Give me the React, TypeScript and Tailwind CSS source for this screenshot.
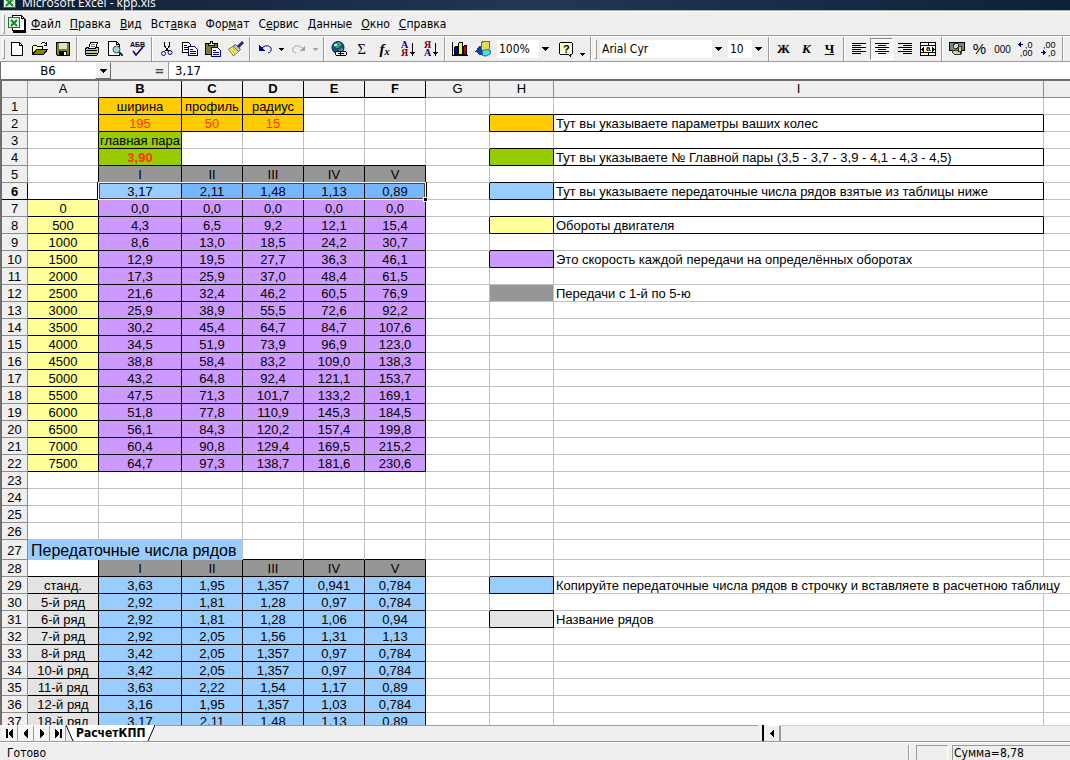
import type { ReactNode } from 'react'
import { clsx } from 'clsx'

type Cell = {
  text?: string;
  fill?: string;
  boxed?: boolean;
  span?: number;
  className?: string;
}

const COLUMNS = ['A', 'B', 'C', 'D', 'E', 'F', 'G', 'H', 'I', 'J']
const COLUMN_WIDTHS = [
  'w-[71px]', 'w-[83px]', 'w-[61px]', 'w-[61px]', 'w-[61px]',
  'w-[61px]', 'w-[64px]', 'w-[64px]', 'w-[490px]', ''
]
const GEARS = ['I', 'II', 'III', 'IV', 'V']

const ORANGE = 'bg-[#ffcc00]'
const GREEN = 'bg-[#99cc00]'
const GRAY = 'bg-[#969696]'
const BLUE = 'bg-[#99ccff]'
const YELLOW = 'bg-[#ffff99]'
const PURPLE = 'bg-[#cc99ff]'
const SILVER = 'bg-[#e3e3e3]'

const SPEEDS = [
  ['0', '0,0', '0,0', '0,0', '0,0', '0,0'],
  ['500', '4,3', '6,5', '9,2', '12,1', '15,4'],
  ['1000', '8,6', '13,0', '18,5', '24,2', '30,7'],
  ['1500', '12,9', '19,5', '27,7', '36,3', '46,1'],
  ['2000', '17,3', '25,9', '37,0', '48,4', '61,5'],
  ['2500', '21,6', '32,4', '46,2', '60,5', '76,9'],
  ['3000', '25,9', '38,9', '55,5', '72,6', '92,2'],
  ['3500', '30,2', '45,4', '64,7', '84,7', '107,6'],
  ['4000', '34,5', '51,9', '73,9', '96,9', '123,0'],
  ['4500', '38,8', '58,4', '83,2', '109,0', '138,3'],
  ['5000', '43,2', '64,8', '92,4', '121,1', '153,7'],
  ['5500', '47,5', '71,3', '101,7', '133,2', '169,1'],
  ['6000', '51,8', '77,8', '110,9', '145,3', '184,5'],
  ['6500', '56,1', '84,3', '120,2', '157,4', '199,8'],
  ['7000', '60,4', '90,8', '129,4', '169,5', '215,2'],
  ['7500', '64,7', '97,3', '138,7', '181,6', '230,6']
]

const RATIOS = [
  ['станд.', '3,63', '1,95', '1,357', '0,941', '0,784'],
  ['5-й ряд', '2,92', '1,81', '1,28', '0,97', '0,784'],
  ['6-й ряд', '2,92', '1,81', '1,28', '1,06', '0,94'],
  ['7-й ряд', '2,92', '2,05', '1,56', '1,31', '1,13'],
  ['8-й ряд', '3,42', '2,05', '1,357', '0,97', '0,784'],
  ['10-й ряд', '3,42', '2,05', '1,357', '0,97', '0,784'],
  ['11-й ряд', '3,63', '2,22', '1,54', '1,17', '0,89'],
  ['12-й ряд', '3,16', '1,95', '1,357', '1,03', '0,784'],
  ['18-й ряд', '3,17', '2,11', '1,48', '1,13', '0,89']
]

const cells: Record<string, Cell> = {}

function fillRow(row: number, from: number, values: string[], style: Cell) {
  values.forEach((text, i) => {
    cells[COLUMNS[from + i] + row] = { text, boxed: true, ...style }
  })
}

function legend(row: number, fill: string, text: string, boxed: boolean, textCell: Cell = {}) {
  cells['H' + row] = { fill, boxed }
  cells['I' + row] = { text, className: 'text-left pl-0.5', ...textCell }
}

fillRow(1, 1, ['ширина', 'профиль', 'радиус'], { fill: ORANGE })
fillRow(2, 1, ['195', '50', '15'], { fill: ORANGE, className: 'text-center text-[#ff3300]' })
fillRow(3, 1, ['главная пара'], { fill: GREEN })
fillRow(4, 1, ['3,90'], { fill: GREEN, className: 'text-center font-bold text-[#ff3300]' })
fillRow(5, 1, GEARS, { fill: GRAY })
fillRow(6, 1, ['3,17'], { fill: BLUE })
fillRow(6, 2, ['2,11', '1,48', '1,13', '0,89'], { fill: 'bg-[#74b6ff]' })
SPEEDS.forEach((values, i) => {
  fillRow(7 + i, 0, values.slice(0, 1), { fill: YELLOW })
  fillRow(7 + i, 1, values.slice(1), { fill: PURPLE })
})
cells.A27 = { text: 'Передаточные числа рядов', fill: BLUE, span: 3, className: 'text-left pl-[3px] text-base leading-[17px]' }
fillRow(28, 1, GEARS, { fill: GRAY })
RATIOS.forEach((values, i) => {
  fillRow(29 + i, 0, values.slice(0, 1), { fill: SILVER })
  fillRow(29 + i, 1, values.slice(1), { fill: BLUE })
})
legend(2, ORANGE, 'Тут вы указываете параметры ваших колес', true, { boxed: true })
legend(4, GREEN, 'Тут вы указываете № Главной пары (3,5 - 3,7 - 3,9 - 4,1 - 4,3 - 4,5)', true, { boxed: true })
legend(6, BLUE, 'Тут вы указываете передаточные числа рядов взятые из таблицы ниже', true, { boxed: true })
legend(8, YELLOW, 'Обороты двигателя', true, { boxed: true })
legend(10, PURPLE, 'Это скорость каждой передачи на определённых оборотах', true)
legend(12, GRAY, 'Передачи с 1-й по 5-ю', false)
legend(29, BLUE, 'Копируйте передаточные числа рядов в строчку и вставляете в расчетною таблицу', true, { span: 2 })
legend(31, SILVER, 'Название рядов', true)

const isBoxed = (col: number, row: number) => Boolean(cells[COLUMNS[col] + row]?.boxed)

function SheetCell({ col, row }: { col: number; row: number }) {
  const cell = cells[COLUMNS[col] + row] ?? {}
  const span = cell.span ?? 1
  const last = col + span >= COLUMNS.length
  const active = row === 6 && col === 1
  const blackRight = cell.boxed || isBoxed(col + span, row)
  const blackBottom = cell.boxed || isBoxed(col, row + 1)

  return (
    <td
      colSpan={span}
      className={clsx(
        'p-0 pt-0.5 whitespace-nowrap border-b',
        !last && 'border-r',
        blackRight ? 'border-r-black' : 'border-r-[#c0c0c0]',
        blackBottom ? 'border-b-black' : 'border-b-[#c0c0c0]',
        cell.fill ?? 'bg-white',
        cell.className ?? 'text-center',
        active && 'relative'
      )}
    >
      {cell.text}
      {active && (
        <span className="absolute -left-px -top-px z-10 h-[18px] w-[328px] border border-[#f4f4f4] shadow-[inset_0_0_0_1px_#4b4238,-1px_0_0_0_#000,1px_0_0_0_#000] pointer-events-none">
          <span className="absolute -right-[3px] -bottom-[3px] size-[5px] border border-white bg-black" />
        </span>
      )}
    </td>
  )
}

function Sheet() {
  const rows = Array.from({ length: 37 }, (_, i) => i + 1)

  return (
    <div className="min-h-0 flex-1 overflow-hidden border-l-2 border-[#6e6e6e] bg-white">
      <table className="w-full table-fixed border-separate border-spacing-0 font-['Liberation_Sans',Arial,sans-serif] text-[13px] leading-[14px]">
        <colgroup>
          <col className="w-[26px]" />
          {COLUMN_WIDTHS.map((width, i) => <col key={i} className={width} />)}
        </colgroup>
        <thead>
          <tr className="h-[17px] bg-[#efefef]">
            <th className="border-r border-b border-[#9a9a9a] p-0" />
            {COLUMNS.map((name, i) => {
              const active = i >= 1 && i <= 5
              return (
                <th
                  key={name}
                  scope="col"
                  className={clsx(
                    'border-b p-0 leading-4',
                    name !== 'J' && 'border-r',
                    active ? 'border-black font-bold' : 'border-[#8c8c8c] font-normal'
                  )}
                >
                  {name !== 'J' && name}
                </th>
              )
            })}
          </tr>
        </thead>
        <tbody>
          {rows.map((row) => (
            <tr key={row} className={row === 27 ? 'h-5' : 'h-[17px]'}>
              <th
                scope="row"
                className={clsx(
                  'border-r border-b bg-[#efefef] p-0 pt-0.5',
                  row === 6 ? 'border-black font-bold' : 'border-[#8c8c8c] font-normal'
                )}
              >
                {row}
              </th>
              {COLUMNS.map((name, col) => {
                if (row === 27 && (col === 1 || col === 2)) return null
                if (row === 29 && col === 9) return null
                return <SheetCell key={name} col={col} row={row} />
              })}
            </tr>
          ))}
        </tbody>
      </table>
    </div>
  )
}

function Icon({ children }: { children: ReactNode }) {
  return (
    <svg className="size-4 shrink-0 overflow-visible" viewBox="0 0 16 16" fill="none" shapeRendering="crispEdges">
      {children}
    </svg>
  )
}

function SortIcon({ top, bottom, topColor, bottomColor }: { top: string; bottom: string; topColor: string; bottomColor: string }) {
  return (
    <Icon>
      <g fontFamily="Liberation Serif, serif" fontWeight="700" fontSize="10">
        <text x="1" y="7" fill={topColor}>{top}</text>
        <text x="1" y="15" fill={bottomColor}>{bottom}</text>
      </g>
      <path d="M12.500 2v12" stroke="#000" />
      <path d="M10 11h5v1h-1v1h-1v2h-1v-2h-1v-1h-1z" fill="#000" />
    </Icon>
  )
}

function AlignIcon({ short }: { short: string }) {
  return (
    <Icon>
      <path d="M1 2.500h14M1 6.500h14M1 10.500h14" stroke="#000" />
      <path d={short} stroke="#000" />
    </Icon>
  )
}

const icons = {
  newFile: (
    <Icon>
      <path d="M2.500 1.500h8l3 3v10h-11z" fill="#fff" stroke="#000" />
      <path d="M10.500 1.500v3h3" stroke="#000" />
    </Icon>
  ),
  open: (
    <Icon>
      <path d="M.5 13.500v-8l1-1h3l1 1h5v3" fill="#ffff9c" stroke="#000" />
      <path d="M.5 13.500l4-5h11l-4 5z" fill="#848200" stroke="#000" />
      <path d="M9 2.500h1M10 1.500h3M13 2.500h1M14.500 1v4M12 4.500h3" stroke="#000" />
    </Icon>
  ),
  save: (
    <Icon>
      <path d="M1.500 1.500h13v13h-12l-1-1z" fill="#848200" stroke="#000" />
      <path d="M4 2h8v6H4z" fill="#dedede" />
      <path d="M4 10h8v4H4z" fill="#000" />
      <path d="M9 11h2v3H9z" fill="#fff" />
    </Icon>
  ),
  print: (
    <Icon>
      <path d="M1.500 7.500l2-1h11v5l-2 3h-10l-1-1z" fill="#c6c3c6" stroke="#000" />
      <path d="M4.500 7.500l2-6h7l-2 6z" fill="#fff" stroke="#000" />
      <path d="M7 3.500h4M7 5.500h4" stroke="#7b7b7b" />
      <path d="M2 9.500h11M2 12.500h11" stroke="#000" />
      <path d="M8 11.500h3" stroke="#c8c800" />
    </Icon>
  ),
  preview: (
    <Icon>
      <path d="M1.500.5h8l3 3v11h-11z" fill="#fff" stroke="#000" />
      <path d="M9.500.5v3h3" stroke="#000" />
      <circle cx="9.500" cy="8.500" r="3.500" fill="#a5d8de" stroke="#444" shapeRendering="auto" />
      <path d="M12 11l3.500 4" stroke="#234" strokeWidth="2" />
    </Icon>
  ),
  spelling: (
    <Icon>
      <text x="0" y="6" fontFamily="Liberation Sans, sans-serif" fontWeight="700" fontSize="7" fill="#000">АБВ</text>
      <path d="M3 10l3 4 7-8" stroke="#000084" strokeWidth="1.500" shapeRendering="auto" />
    </Icon>
  ),
  cut: (
    <Icon>
      <path d="M5.500 1v4l4 5M10.500 1v4l-4 5" stroke="#000" />
      <circle cx="4.500" cy="12.500" r="2" stroke="#000084" shapeRendering="auto" />
      <circle cx="11" cy="11.500" r="2" stroke="#000084" shapeRendering="auto" />
    </Icon>
  ),
  copy: (
    <Icon>
      <path d="M.5 1.500h6l2 2v8h-8z" fill="#fff" stroke="#000" />
      <path d="M2 4.500h3M2 6.500h4M2 8.500h4" stroke="#000" />
      <path d="M6.500 5.500h6l3 3v6h-9z" fill="#fff" stroke="#000084" />
      <path d="M8 8.500h3M8 10.500h6M8 12.500h6" stroke="#000084" />
    </Icon>
  ),
  paste: (
    <Icon>
      <path d="M.5 2.500h12v11h-12z" fill="#7b7a39" stroke="#000" />
      <path d="M3.500 3.500v-1h2v-2h2v2h2v2h-6z" fill="#ffff9c" stroke="#000" />
      <path d="M6.500 6.500h6l3 3v6h-9z" fill="#fff" stroke="#000084" />
      <path d="M8 9.500h3M8 11.500h6M8 13.500h6" stroke="#000084" />
    </Icon>
  ),
  brush: (
    <Icon>
      <path d="M15 1l-5 5" stroke="#26267a" strokeWidth="3" shapeRendering="auto" />
      <path d="M7.500 3.500l5 5-2 2-6-5z" fill="#c6c3c6" stroke="#555" shapeRendering="auto" />
      <path d="M5 5.500l5.500 5-5 4.500-5-7z" fill="#ffff84" stroke="#848200" shapeRendering="auto" />
      <path d="M3 8l4 5M5 7l3 4" stroke="#a8a640" shapeRendering="auto" />
    </Icon>
  ),
  undo: (
    <Icon>
      <path d="M3 9l3-3q5-3 8 1 1 4-3 5" stroke="#000084" shapeRendering="auto" />
      <path d="M2 4v6h6z" fill="#000084" />
    </Icon>
  ),
  redo: (
    <Icon>
      <path d="M13 9l-3-3q-5-3-8 1-1 4 3 5" stroke="#a5a5a5" shapeRendering="auto" />
      <path d="M14 4v6H8z" fill="#a5a5a5" />
    </Icon>
  ),
  link: (
    <Icon>
      <circle cx="7" cy="6.500" r="6" fill="#19517f" stroke="#001b4a" shapeRendering="auto" />
      <path d="M4 2l4-1 3 2-2 3-3 1-3-1zM8 8l4-1-1 4-3 1z" fill="#35a06b" />
      <path d="M3 3h3v2H3z" fill="#b8e3ef" />
      <rect x="4.500" y="10.500" width="6" height="4" rx="2" fill="#efefef" stroke="#000" />
      <rect x="9.500" y="10.500" width="6" height="4" rx="2" fill="#efefef" stroke="#000" />
      <path d="M7 12.500h6" stroke="#000" />
    </Icon>
  ),
  chart: (
    <Icon>
      <path d="M.5 1v13.500H16" stroke="#000" />
      <path d="M2.500 6.500l1-1h2v8h-3z" fill="#0000c6" stroke="#000" />
      <path d="M6.500 2.500l1-1h3v12h-4z" fill="#ffff00" stroke="#000" />
      <path d="M11.500 5.500l1-1h2v9h-3z" fill="#c60000" stroke="#000" />
    </Icon>
  ),
  drawing: (
    <Icon>
      <path d="M6.500 1.500l2-1h6v7l-2 2h-6z" fill="#e9d84f" stroke="#7a6c00" />
      <path d="M0 11l5-7 3 7z" fill="#123cae" />
      <path d="M1 11h7v3H4z" fill="#123cae" />
      <path d="M7.500 9.500q4-2 8 0v3q-4 4-8 2z" fill="#56d6de" stroke="#167c8a" shapeRendering="auto" />
    </Icon>
  ),
  help: (
    <Icon>
      <path d="M2.500 1.500h11l1 1v10l-1 1h-1v2l-2-2h-8l-1-1v-10z" fill="#ffffce" stroke="#000" />
      <text x="5" y="12" fontFamily="Liberation Sans, sans-serif" fontWeight="700" fontSize="11" fill="#000">?</text>
    </Icon>
  ),
  alignLeft: <AlignIcon short="M1 4.500h9M1 8.500h9M1 12.500h9" />,
  alignCenter: <AlignIcon short="M4 4.500h8M4 8.500h8M4 12.500h8" />,
  alignRight: <AlignIcon short="M6 4.500h9M6 8.500h9M6 12.500h9" />,
  merge: (
    <Icon>
      <path d="M.5 1.500h15v13H.5z" fill="#fff" stroke="#000" />
      <path d="M1 4.500h14M1 11.500h14M8.500 1v3M8.500 12v3" stroke="#000" />
      <path d="M1 8h1V7h1V6h1v5H3v-1H2V9H1zM15 8h-1V7h-1V6h-1v5h1v-1h1V9h1z" fill="#000" />
      <text x="6" y="10" fontFamily="Liberation Sans, sans-serif" fontWeight="700" fontSize="8" fill="#000">a</text>
    </Icon>
  ),
  currency: (
    <Icon>
      <path d="M.5 1.500h15v8H.5z" fill="#6f8f7b" stroke="#000" />
      <circle cx="7" cy="5" r="2.500" fill="#c9dccd" stroke="#263d30" />
      <path d="M9.500 5.500h3v7h-3z" fill="#d8cf86" stroke="#333" />
      <path d="M3.500 9.500h6v1h2v3h-6l-2-2z" fill="#d8cf86" stroke="#333" />
    </Icon>
  ),
  addDecimal: (
    <Icon>
      <path d="M0 3.500h5M1.500 2v3M2.500 1v5" stroke="#000084" />
      <g fontFamily="Liberation Sans, sans-serif" fontSize="9" fill="#000">
        <text x="7" y="7">,0</text>
        <text x="2" y="15">,00</text>
      </g>
    </Icon>
  ),
  removeDecimal: (
    <Icon>
      <path d="M0 11.500h5M3.500 10v3M2.500 9v5" stroke="#000084" />
      <g fontFamily="Liberation Sans, sans-serif" fontSize="9" fill="#000">
        <text x="2" y="7">,00</text>
        <text x="7" y="15">,0</text>
      </g>
    </Icon>
  )
}

function ToolButton({ label, pressed, children }: { label: string; pressed?: boolean; children: ReactNode }) {
  return (
    <button
      type="button"
      title={label}
      aria-label={label}
      aria-pressed={pressed}
      className={clsx(
        'flex h-[22px] w-[23px] shrink-0 items-center justify-center',
        pressed && 'border border-t-[#8c8c8c] border-l-[#8c8c8c] border-r-white border-b-white bg-[#f8f8f8]'
      )}
    >
      {children}
    </button>
  )
}

function Caret({ className = 'fill-black' }: { className?: string }) {
  return (
    <svg className={clsx('h-1 w-[7px]', className)} viewBox="0 0 7 4" shapeRendering="crispEdges">
      <path d="M0 0h7v1H6v1H5v1H4v1H3V3H2V2H1V1H0z" />
    </svg>
  )
}

function SmallCaret({ className = 'fill-black' }: { className?: string }) {
  return (
    <svg className={clsx('h-[3px] w-[5px]', className)} viewBox="0 0 5 3" shapeRendering="crispEdges">
      <path d="M0 0h5v1H4v1H3v1H2V2H1V1H0z" />
    </svg>
  )
}

function CaretButton({ label, className }: { label: string; className?: string }) {
  return (
    <button type="button" title={label} aria-label={label} className="flex h-[22px] w-[11px] shrink-0 items-center justify-center">
      <SmallCaret className={className} />
    </button>
  )
}

function Separator() {
  return (
    <div className="flex w-1.5 shrink-0 justify-center self-stretch">
      <div className="w-0.5 border-l border-[#9a9a9a] bg-white" />
    </div>
  )
}

function Grip() {
  return <div className="h-5 w-[3px] shrink-0 border border-t-white border-l-white border-r-[#9a9a9a] border-b-[#9a9a9a]" />
}

function Combo({ label, value, width }: { label: string; value: string; width: string }) {
  return (
    <div className={clsx('relative flex h-[18px] shrink-0 bg-white', width)}>
      <select aria-label={label} className="w-full appearance-none bg-transparent pl-0.5 leading-4" defaultValue={value}>
        <option>{value}</option>
      </select>
      <span className="pointer-events-none absolute inset-y-0 right-0 flex w-3 items-center justify-center bg-[#efefef]">
        <Caret />
      </span>
    </div>
  )
}

function TitleBar() {
  return (
    <header className="flex h-[11px] shrink-0 items-end gap-1 overflow-hidden border-b border-[#a9adb0] bg-linear-to-r from-[#0d2035] via-[#213853] to-[#0b2238] pl-0.5 text-white">
      <Icon>
        <path d="M1.500 2.500h12v11h-12z" fill="#dff0df" stroke="#127a2c" />
        <path d="M4 5l7 7M11 5l-7 7" stroke="#128a30" strokeWidth="2" shapeRendering="auto" />
      </Icon>
      <h1 className="shrink-0 font-['Open_Sans','Noto_Sans',sans-serif] leading-[14px] font-medium">Microsoft Excel - kpp.xls</h1>
    </header>
  )
}

// [before, access key, after]
const MENU = [
  ['', 'Ф', 'айл'],
  ['', 'П', 'равка'],
  ['', 'В', 'ид'],
  ['Вст', 'а', 'вка'],
  ['Фор', 'м', 'ат'],
  ['С', 'е', 'рвис'],
  ['', 'Д', 'анные'],
  ['', 'О', 'кно'],
  ['', 'С', 'правка']
]

function MenuBar() {
  return (
    <nav className="flex h-[25px] shrink-0 items-center border-t border-b border-t-white border-b-[#9a9a9a] pl-0.5">
      <Grip />
      <svg className="mr-px ml-[3px] h-[18px] w-[18px]" viewBox="0 0 18 18" fill="none" shapeRendering="crispEdges">
        <path d="M4.500.5h9l3 3v12h-12z" fill="#fff" stroke="#000" />
        <path d="M13.500.5v3h3" stroke="#000" />
        <path d="M17 4v13H5" stroke="#000" strokeWidth="2" />
        <path d="M.5 2.500h11v10H.5z" fill="#dff0df" stroke="#127a2c" />
        <path d="M3 5l6 6M9 5l-6 6" stroke="#128a30" strokeWidth="2" shapeRendering="auto" />
      </svg>
      <ul className="flex gap-px">
        {MENU.map(([before, key, after]) => (
          <li key={before + key + after}>
            <button type="button" className="px-1 leading-4">
              {before}<u>{key}</u>{after}
            </button>
          </li>
        ))}
      </ul>
    </nav>
  )
}

function Toolbars() {
  return (
    <div className="flex h-[26px] shrink-0 items-center overflow-hidden border-t border-b border-t-white border-b-[#9a9a9a] pl-0.5">
      <Grip />
      <ToolButton label="Создать">{icons.newFile}</ToolButton>
      <ToolButton label="Открыть">{icons.open}</ToolButton>
      <ToolButton label="Сохранить">{icons.save}</ToolButton>
      <Separator />
      <ToolButton label="Печать">{icons.print}</ToolButton>
      <ToolButton label="Предварительный просмотр">{icons.preview}</ToolButton>
      <ToolButton label="Орфография">{icons.spelling}</ToolButton>
      <Separator />
      <ToolButton label="Вырезать">{icons.cut}</ToolButton>
      <ToolButton label="Копировать">{icons.copy}</ToolButton>
      <ToolButton label="Вставить">{icons.paste}</ToolButton>
      <ToolButton label="Формат по образцу">{icons.brush}</ToolButton>
      <Separator />
      <ToolButton label="Отменить">{icons.undo}</ToolButton>
      <CaretButton label="Список отмены" />
      <ToolButton label="Вернуть">{icons.redo}</ToolButton>
      <CaretButton label="Список возврата" className="fill-[#a5a5a5]" />
      <Separator />
      <ToolButton label="Гиперссылка">{icons.link}</ToolButton>
      <ToolButton label="Автосумма">
        <span className="font-['Liberation_Serif',serif] text-[15px]">Σ</span>
      </ToolButton>
      <ToolButton label="Вставка функции">
        <span className="font-['Liberation_Serif',serif] text-[15px] font-bold italic">f</span>
        <span className="pt-1 font-['Liberation_Serif',serif] text-[10px] font-bold italic">x</span>
      </ToolButton>
      <ToolButton label="Сортировка по возрастанию">
        <SortIcon top="А" bottom="Я" topColor="#000084" bottomColor="#840000" />
      </ToolButton>
      <ToolButton label="Сортировка по убыванию">
        <SortIcon top="Я" bottom="А" topColor="#840000" bottomColor="#000084" />
      </ToolButton>
      <Separator />
      <ToolButton label="Мастер диаграмм">{icons.chart}</ToolButton>
      <ToolButton label="Рисование">{icons.drawing}</ToolButton>
      <div className="flex px-[3px]">
        <Combo label="Масштаб" value="100%" width="w-[54px]" />
      </div>
      <ToolButton label="Справка">{icons.help}</ToolButton>
      <button type="button" aria-label="Другие кнопки" className="flex h-[22px] w-[11px] shrink-0 items-end justify-center pb-1">
        <SmallCaret />
      </button>
      <Separator />
      <Grip />
      <div className="flex gap-1 pr-0.5 pl-[3px]">
        <Combo label="Шрифт" value="Arial Cyr" width="w-[124px]" />
        <Combo label="Размер" value="10" width="w-[36px]" />
      </div>
      <Separator />
      <ToolButton label="Полужирный">
        <span className="font-['Liberation_Serif',serif] text-[13px] font-bold">Ж</span>
      </ToolButton>
      <ToolButton label="Курсив">
        <span className="font-['Liberation_Serif',serif] text-[13px] font-bold italic">К</span>
      </ToolButton>
      <ToolButton label="Подчеркнутый">
        <span className="font-['Liberation_Serif',serif] text-[13px] font-bold underline">Ч</span>
      </ToolButton>
      <Separator />
      <ToolButton label="По левому краю">{icons.alignLeft}</ToolButton>
      <ToolButton label="По центру" pressed>{icons.alignCenter}</ToolButton>
      <ToolButton label="По правому краю">{icons.alignRight}</ToolButton>
      <ToolButton label="Объединить и поместить в центре">{icons.merge}</ToolButton>
      <Separator />
      <ToolButton label="Денежный формат">{icons.currency}</ToolButton>
      <ToolButton label="Процентный формат">
        <span className="font-['Liberation_Sans',sans-serif] text-[15px]">%</span>
      </ToolButton>
      <ToolButton label="Формат с разделителями">
        <span className="font-['Liberation_Sans',sans-serif] text-[10px]">000</span>
      </ToolButton>
      <ToolButton label="Увеличить разрядность">{icons.addDecimal}</ToolButton>
      <ToolButton label="Уменьшить разрядность">{icons.removeDecimal}</ToolButton>
      <Separator />
    </div>
  )
}

function FormulaBar() {
  return (
    <div className="flex h-[19px] shrink-0 border-b-2 border-[#6e6e6e] text-[13px]">
      <input
        aria-label="Имя ячейки"
        defaultValue="B6"
        className="w-[95px] border-l border-[#6e6e6e] bg-white text-center"
      />
      <button
        type="button"
        aria-label="Список имён"
        className="flex w-4 items-center justify-center border border-t-white border-l-white border-r-[#6e6e6e] border-b-[#6e6e6e]"
      >
        <Caret />
      </button>
      <div className="w-10" />
      <button type="button" aria-label="Изменить формулу" className="w-[18px] border-r border-[#9a9a9a] text-center font-bold leading-4 text-[#444]">=</button>
      <input aria-label="Строка формул" defaultValue="3,17" className="min-w-0 flex-1 bg-white pl-1.5" />
    </div>
  )
}

const TAB_NAV = [
  { label: 'Первый лист', d: 'M1 1h2v9H1zM8 1v9H7V9H6V8H5V7H4V4h1V3h1V2h1V1z' },
  { label: 'Предыдущий лист', d: 'M7 1v9H6V9H5V8H4V7H3V4h1V3h1V2h1V1z' },
  { label: 'Следующий лист', d: 'M3 1v9h1V9h1V8h1V7h1V4H6V3H5V2H4V1z' },
  { label: 'Последний лист', d: 'M7 1h2v9H7zM2 1v9h1V9h1V8h1V7h1V4H5V3H4V2H3V1z' }
]

function SheetTabs() {
  return (
    <div className="flex h-[17px] shrink-0 border-b border-[#9a9a9a] pl-0.5">
      {TAB_NAV.map(({ label, d }) => (
        <button
          key={label}
          type="button"
          aria-label={label}
          className="flex w-4 items-center justify-center border-t border-r border-t-white border-r-[#9a9a9a] bg-[#f6f6f6]"
        >
          <svg className="h-[11px] w-[10px]" viewBox="0 0 10 11" shapeRendering="crispEdges"><path d={d} /></svg>
        </button>
      ))}
      <button type="button" className="flex font-bold leading-4">
        <svg className="h-4 w-2" viewBox="0 0 8 16">
          <path d="M0 0h8v16h-1z" fill="#fff" />
          <path d="M0 0l7 16" stroke="#000" />
        </svg>
        <span className="bg-white px-0.5">РасчетКПП</span>
        <svg className="h-4 w-2" viewBox="0 0 8 16">
          <path d="M0 0h8L1 16H0z" fill="#fff" />
          <path d="M8 0L1 16" stroke="#000" />
        </svg>
      </button>
      <div className="flex-1 border-t border-[#9a9a9a]" />
      <div className="flex w-[312px] pl-1">
        <div className="w-0.5 bg-black" />
        <button type="button" aria-label="Прокрутить влево" className="flex w-[17px] items-center justify-center border-t border-r-2 border-t-white border-r-[#9a9a9a]">
          <svg className="h-[7px] w-1" viewBox="0 0 4 7" shapeRendering="crispEdges">
            <path d="M4 0v7H3V6H2V5H1V4H0V3h1V2h1V1h1V0z" />
          </svg>
        </button>
        <div className="flex-1 border-t border-[#d0d0d0]" />
      </div>
    </div>
  )
}

function StatusBar() {
  return (
    <footer className="flex h-[18px] shrink-0 border-t border-white leading-[14px]">
      <div className="flex-1 pt-[3px] pl-[7px]">Готово</div>
      <div className="flex w-[162px] gap-1 pt-0.5">
        <div className="mr-0.5 w-0.5 border-l border-[#9a9a9a] bg-white" />
        <div className="w-8 border-t border-l border-[#9a9a9a] border-r border-r-white" />
        <div className="flex-1 border-t border-l border-[#9a9a9a] pl-px">Сумма=8,78</div>
      </div>
    </footer>
  )
}

export default function App() {
  return (
    <div className="flex h-screen flex-col overflow-hidden bg-[#efefef] font-['DejaVu_Sans_Condensed','Noto_Sans',sans-serif] text-[12px] text-black">
      <TitleBar />
      <MenuBar />
      <Toolbars />
      <FormulaBar />
      <Sheet />
      <SheetTabs />
      <StatusBar />
    </div>
  )
}
